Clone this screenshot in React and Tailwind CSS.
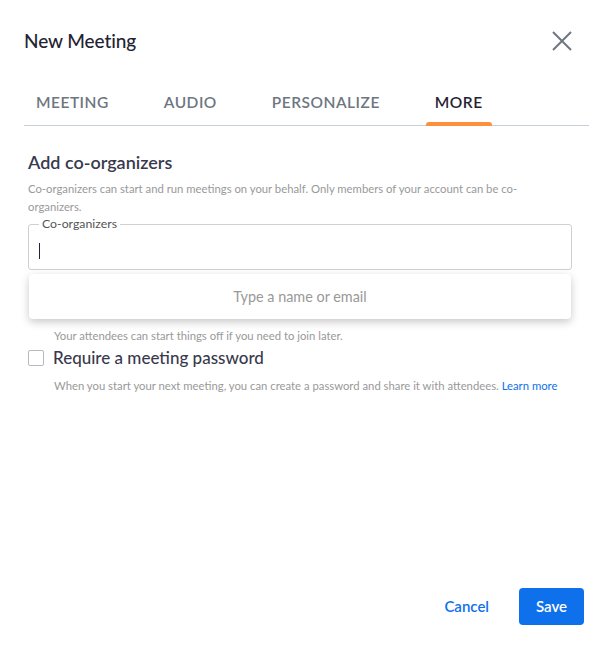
import React, { useState } from 'react';

const tabs = ['Meeting', 'Audio', 'Personalize', 'More'];

const Checkbox = ({ checked, onChange }) => (
  <button
    type="button"
    onClick={onChange}
    className={`w-4 h-4 shrink-0 rounded-[2px] border ${checked ? 'bg-[#0e71eb] border-[#0e71eb]' : 'bg-white border-[#b8b8bf]'}`}
  />
);

const App = () => {
  const [tab, setTab] = useState('More');
  const [password, setPassword] = useState(false);

  return (
    <div className="h-[659px] bg-white flex flex-col font-['Lato','Noto_Sans',sans-serif] text-[#232333]">
      {/* Header */}
      <div className="h-[82px] pl-6 pr-[38px] flex items-center justify-between">
        <h1 className="text-[19px] font-medium tracking-[-0.1px]">New Meeting</h1>
        <button className="text-[#6e7680]">
          <svg width="20" height="20" viewBox="0 0 20 20" fill="none" stroke="currentColor" strokeWidth="2">
            <path d="M1 1 L19 19 M19 1 L1 19" />
          </svg>
        </button>
      </div>

      {/* Tabs */}
      <div className="ml-6 mr-[21px] flex gap-[31px] border-b border-[#c8d0da]">
        {tabs.map(t => (
          <button
            key={t}
            onClick={() => setTab(t)}
            className={`relative h-[43px] px-3 pb-[2px] text-[15.5px] font-semibold uppercase tracking-[0.5px] ${tab === t ? 'text-[#232333]' : 'text-[#6e7680]'}`}
          >
            {t}
            {tab === t && <span className="absolute left-[3px] right-[3px] -bottom-px h-[4px] rounded-t-[3px] bg-[#ff8f3a]" />}
          </button>
        ))}
      </div>

      {/* Body */}
      <div className="pl-7 pr-[38px]">
        <h2 className="mt-[24px] text-[18px] leading-6 font-semibold text-[#39394d]">Add co-organizers</h2>
        <p className="mt-[6px] text-[11.3px] leading-[18px] text-[#999] pr-6">
          Co-organizers can start and run meetings on your behalf. Only members of your account can be co-organizers.
        </p>

        <div className="relative">
          <fieldset className="border border-[#cfcfd4] rounded-[3px] pl-[10px] pr-3">
            <legend className="px-[3px] text-[12.3px] leading-4 text-[#555]">Co-organizers</legend>
            <div className="h-[37px] flex items-center">
              <span className="w-px h-4 bg-[#232333]" />
            </div>
          </fieldset>

          <div className="absolute left-px right-px top-full mt-1 h-[45px] bg-white rounded-[4px] shadow-[0_3px_8px_rgba(0,0,0,0.22)] flex items-center justify-center text-[14.4px] text-[#999] z-10">
            Type a name or email
          </div>
        </div>

        {/* row underneath the suggestion list */}
        <div className="h-[57px]" />
        <p className="pl-[26px] text-[11.3px] leading-[18px] text-[#999]">
          Your attendees can start things off if you need to join later.
        </p>

        <div className="mt-px flex items-center gap-[9px] h-6">
          <Checkbox checked={password} onChange={() => setPassword(!password)} />
          <span className="text-[17px] font-medium text-[#39394d]">Require a meeting password</span>
        </div>
        <p className="pl-[26px] mt-[7px] text-[11.3px] leading-[18px] text-[#999]">
          When you start your next meeting, you can create a password and share it with attendees.{' '}
          <a className="text-[#0e71eb]">Learn more</a>
        </p>
      </div>

      {/* Footer */}
      <div className="mt-auto pb-[34px] pr-[26px] flex items-center justify-end gap-[30px]">
        <button className="text-[15px] font-semibold text-[#0e71eb]">Cancel</button>
        <button className="w-[65px] h-[37px] rounded-[4px] bg-[#0e71eb] text-white text-[15px] font-semibold">Save</button>
      </div>
    </div>
  );
};

export default App;
